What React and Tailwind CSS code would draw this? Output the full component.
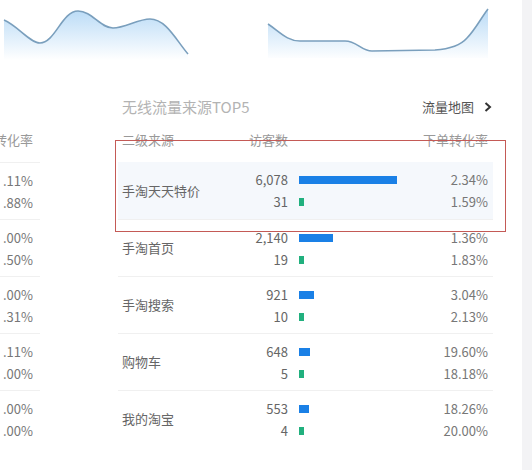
import React from 'react';

const rows = [
  { name: '手淘天天特价', uv: '6,078', buy: '31', bar: 98, r1: '2.34%', r2: '1.59%', hl: true },
  { name: '手淘首页', uv: '2,140', buy: '19', bar: 34, r1: '1.36%', r2: '1.83%' },
  { name: '手淘搜索', uv: '921', buy: '10', bar: 15, r1: '3.04%', r2: '2.13%' },
  { name: '购物车', uv: '648', buy: '5', bar: 11, r1: '19.60%', r2: '18.18%' },
  { name: '我的淘宝', uv: '553', buy: '4', bar: 10, r1: '18.26%', r2: '20.00%' },
];

const leftRates = [
  ['.11%', '.88%'],
  ['.00%', '.50%'],
  ['.00%', '.31%'],
  ['.11%', '.00%'],
  ['.00%', '.00%'],
];

const Spark = ({ id, line, fill, width }) => (
  <svg width={width} height="62" viewBox={`0 0 ${width} 62`}>
    <defs>
      <linearGradient id={id} x1="0" y1="8" x2="0" y2="60" gradientUnits="userSpaceOnUse">
        <stop offset="0" stopColor="#b8daf6" />
        <stop offset="1" stopColor="#ffffff" />
      </linearGradient>
    </defs>
    <path d={fill} fill={`url(#${id})`} />
    <path d={line} fill="none" stroke="#7a9fbd" strokeWidth="1.6" />
  </svg>
);

const leftLine =
  'M4,20 C18,26 30,43 40,43 C55,43 62,11 78,11 C92,11 100,28 113,28 C125,28 138,19 150,19 C166,19 176,40 188,54';
const rightLine =
  'M13,24 C25,32 32,41 45,41 L90,41 C102,41 106,51 117,51 L180,50 C195,49 205,46 212,38 C220,30 226,18 233,9';

export default function App() {
  return (
    <div className="w-[532px] h-[470px] bg-white flex overflow-hidden font-['Noto_Sans_CJK_SC',sans-serif]">
      <div className="flex-1 relative">
        <div className="flex h-[62px]">
          <Spark id="g1" width={200} line={leftLine} fill={`${leftLine} L188,60 L4,60 Z`} />
          <div className="ml-[55px]">
            <Spark id="g2" width={240} line={rightLine} fill={`${rightLine} L233,58 L13,58 Z`} />
          </div>
        </div>

        <div className="mt-[35px] h-[20px] pl-[122px] pr-[30px] flex items-center justify-between">
          <span className="text-[15px] text-[#b3b3b3] leading-[20px]">无线流量来源TOP5</span>
          <span className="flex items-center gap-[10px] text-[13px] text-[#555]">
            流量地图
            <svg width="8" height="10" viewBox="0 0 8 10">
              <polyline points="1.5,1 6,5 1.5,9" fill="none" stroke="#333" strokeWidth="2" />
            </svg>
          </span>
        </div>

        <div className="flex mt-[13px]">
          <div className="w-[40px] text-[13px] text-[#777]">
            <div className="h-[32px] w-[33px] flex justify-end overflow-hidden leading-[20px] text-[#999] whitespace-nowrap">
              <span>下单转化率</span>
            </div>
            {leftRates.map((r, i) => (
              <div key={i} className="h-[57px] border-t border-[#f0f0f0] pt-[7px] leading-[22px]">
                <div className="w-[33px] flex justify-end overflow-hidden">{r[0]}</div>
                <div className="w-[33px] flex justify-end overflow-hidden">{r[1]}</div>
              </div>
            ))}
          </div>

          <div className="ml-[78px] w-[375px] text-[13px]">
            <div className="h-[32px] flex leading-[20px] text-[#999]">
              <span className="w-[120px] pl-[4px]">二级来源</span>
              <span className="w-[50px] text-right">访客数</span>
              <span className="flex-1 text-right pr-[5px]">下单转化率</span>
            </div>
            {rows.map((r, i) => (
              <div
                key={r.name}
                className={`h-[57px] flex ${r.hl ? 'bg-[#f5f8fc]' : ''} ${i > 0 ? 'border-t border-[#f0f0f0]' : ''}`}
              >
                <div className="w-[120px] pl-[4px] flex items-center text-[#666]">{r.name}</div>
                <div className="w-[50px] pt-[7px] leading-[22px] text-right text-[#666]">
                  <div>{r.uv}</div>
                  <div>{r.buy}</div>
                </div>
                <div className="ml-[11px] w-[100px] pt-[7px]">
                  <div className="h-[22px] flex items-center">
                    <div className="h-[8px] bg-[#1a80e6]" style={{ width: r.bar }} />
                  </div>
                  <div className="h-[22px] flex items-center">
                    <div className="h-[8px] w-[5px] bg-[#21b07e]" />
                  </div>
                </div>
                <div className="w-[89px] pt-[7px] leading-[22px] text-right text-[#777]">
                  <div>{r.r1}</div>
                  <div>{r.r2}</div>
                </div>
              </div>
            ))}
          </div>
        </div>

        <div className="absolute left-[115px] top-[140px] w-[391px] h-[92px] border border-[#c45a56]" />
      </div>
      <div className="w-[10px] bg-[#f3f3f5]" />
    </div>
  );
}
